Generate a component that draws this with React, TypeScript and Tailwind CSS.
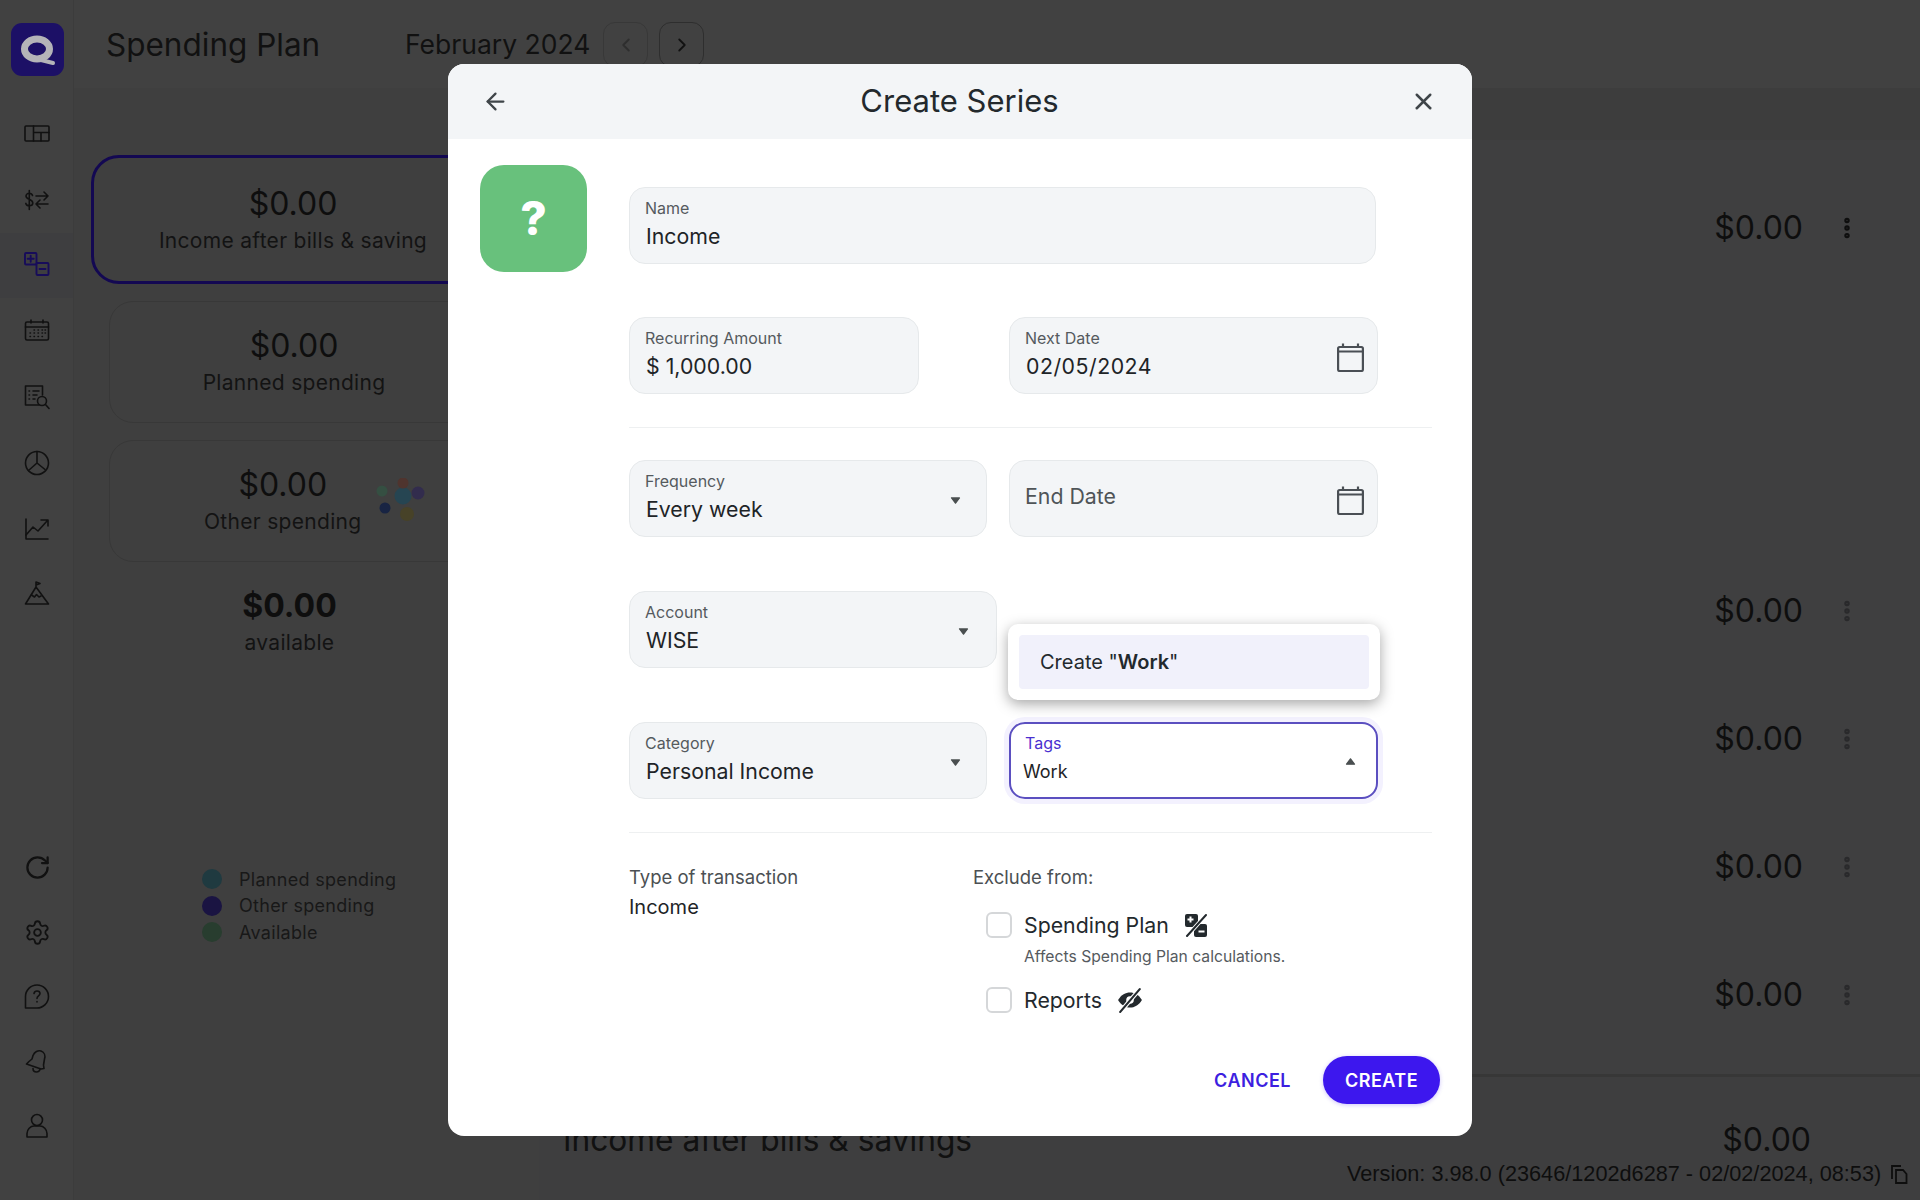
import React from "react";
import { ArrowLeft, X, ChevronLeft, ChevronRight, RotateCw, Settings, EllipsisVertical } from "lucide-react";

const FONT = "font-['Inter','Noto_Sans',sans-serif]";
const iconCls = "w-[26px] h-[26px]";

function Ico({ children, color = "#111111", sw = 1.6 }: { children: React.ReactNode; color?: string; sw?: number }) {
  return (
    <svg viewBox="0 0 26 26" className={iconCls} fill="none" stroke={color} strokeWidth={sw} strokeLinecap="round" strokeLinejoin="round">
      {children}
    </svg>
  );
}

const topIcons = [
  <Ico key="d"><rect x="1" y="5" width="24" height="15" rx="1" /><path d="M9.5 5v15M9.5 11.5H25M17 11.5V20" /></Ico>,
  <Ico key="t"><path d="M8.5 8.5C8 7 6.8 6.3 5.3 6.3 3.500 6.3 2 7.3 2 9c0 3.800 6.800 2.800 6.800 7 0 1.700-1.500 2.700-3.500 2.700-1.700 0-3-.8-3.500-2.300M5.300 3.500v19" /><path d="M12 9h12M20 5l4 4-4 4M24 17H12M16 13l-4 4 4 4" /></Ico>,
  <Ico key="p" color="#170c5a" sw={1.9}><rect x="1" y="1" width="11.500" height="11.500" rx="1" /><rect x="12.500" y="11" width="12" height="12" rx="1" /><path d="M6.700 3.700v6M3.700 6.700h6M15.500 17h6" /></Ico>,
  <Ico key="c"><rect x="1.500" y="4" width="23" height="18" rx="1.500" /><path d="M1.500 9h23M7 2v3M19 2v3" /><path d="M10 12h.5M14 12h.5M18 12h.5M21 12h.5M6 15h.5M10 15h.5M14 15h.5M18 15h.5M21 15h.5M6 18.500h.5M10 18.500h.5M14 18.500h.5M18 18.500h.5" strokeWidth={1.400} /></Ico>,
  <Ico key="l"><path d="M15 21H1.500V2h17v9" /><path d="M5 7h.5M9 7h6M5 11h.5M9 11h4M5 15h.5M9 15h2" /><circle cx="18" cy="17" r="4.500" /><path d="M21.500 20.500l3.500 4" /></Ico>,
  <Ico key="r"><circle cx="13" cy="13" r="11.500" /><path d="M13 1.500V13l8 6.500M13 13l-8.500 7.500" /></Ico>,
  <Ico key="g"><path d="M2 3v20h22" /><path d="M2 19l7-8 5 4 9-10M17 4h7v6" /></Ico>,
  <Ico key="m"><path d="M1.500 23L12 6l12.500 17zM12 6V1l4 1.500L12 4" /><path d="M7.500 14l3 2 2-2.500 2.500 2.500 2-1" /></Ico>,
];

const bottomIcons = [
  <RotateCw key="a" size={27} color="#111111" strokeWidth={2} />,
  <Settings key="b" size={27} color="#111111" strokeWidth={1.6} />,
  <Ico key="c"><path d="M1.500 24V12.500a11.500 11.500 0 1 1 11.500 11.500z" /><path d="M10 9.500c.3-1.600 1.500-2.500 3-2.500 1.700 0 3 1 3 2.600 0 2.400-3 2.400-3 4.900M13 17.500v.5" /></Ico>,
  <Ico key="d"><path d="M9 7.500c1.500-3.500 5-5.500 8-4.500 3.500 1.200 4.500 4.800 3.500 8l-1 6 .5 3.500-3 .5-14.500-5 2.500-2.500 3-2.500z" /><path d="M9 20.500c0 2 1.500 3.500 3.500 3.500s3-1 3.500-2.500" /></Ico>,
  <Ico key="e"><circle cx="13" cy="7" r="5.500" /><path d="M3 24v-3.500c0-4 3.500-7.500 7-7.500h6c3.500 0 7 3.500 7 7.500V24z" /></Ico>,
];

function Caret({ up = false }: { up?: boolean }) {
  return (
    <svg viewBox="0 0 12 8" className="w-[11px] h-[7px]" fill="#4a4f50" stroke="#4a4f50" strokeWidth={1.500} strokeLinejoin="round">
      {up ? <path d="M6 1l4.500 6h-9z" /> : <path d="M1.500 1h9L6 7z" />}
    </svg>
  );
}

function Cal() {
  return (
    <svg viewBox="0 0 27 29" className="w-[27px] h-[29px]" fill="none" stroke="#4a4f55" strokeWidth={2.200} strokeLinejoin="round">
      <rect x="1.100" y="4" width="24.800" height="24" rx="1.500" />
      <path d="M1.100 8.500h24.800M6 .5V4M21 .5V4" />
    </svg>
  );
}

function Field({ w, label, value, right, dim, digits }: { w: string; label?: string; value: string; right?: React.ReactNode; dim?: boolean; digits?: boolean }) {
  return (
    <div className={`${w} h-[77px] rounded-[16px] border border-[#e6e9eb] bg-[#f3f5f7] flex items-center justify-between pl-[15px]`}>
      <div className={`flex flex-col ${dim ? "" : "mt-[-3px]"}`}>
        {label && <span className="text-[16px] leading-[20px] text-[#555a5e]">{label}</span>}
        <span className={`text-[21.300px] leading-[28px] ${dim ? "text-[#4f5457] mt-[-6px]" : "mt-[4px] ml-[1px] text-[#1e2427]"} ${digits ? "tracking-[0.5px]" : ""}`}>{value}</span>
      </div>
      {right}
    </div>
  );
}

function SideItem({ children, active }: { children: React.ReactNode; active?: boolean }) {
  return <div className={`h-[65.800px] w-full pl-[1px] flex items-center justify-center ${active ? "bg-[#3e3e40]" : ""}`}>{children}</div>;
}

function Row({ h, first }: { h: string; first?: boolean }) {
  return (
    <div className={`${h} flex items-center justify-end pr-[60px]`}>
      <span className="text-[32px] text-[#0e0e0e] mr-[31px]">$0.00</span>
      <EllipsisVertical size={26} color={first ? "#0e0e0e" : "#29292b"} strokeWidth={3} />
    </div>
  );
}

export default function App() {
  return (
    <div className={`relative w-[1920px] h-[1200px] overflow-hidden flex bg-[#404040] ${FONT}`}>
      {/* sidebar */}
      <aside className="w-[74px] h-full shrink-0 bg-[#414141] border-r border-[#3c3c3c] flex flex-col">
        <div className="mt-[23px] ml-[11px] w-[53px] h-[53px] rounded-[11px] bg-[#1c1066] flex items-center justify-center">
          <svg viewBox="0 0 53 53" className="w-[53px] h-[53px]" fill="none">
            <ellipse cx="26" cy="26" rx="12.500" ry="10" stroke="#b4b4b8" strokeWidth="7" />
            <path d="M30 37l12 3" stroke="#b4b4b8" strokeWidth="4" strokeLinecap="round" />
          </svg>
        </div>
        <div className="mt-[25px] flex flex-col">
          {topIcons.map((ic, i) => (
            <SideItem key={i} active={i === 2}>{ic}</SideItem>
          ))}
        </div>
        <div className="mt-auto mb-[61px] pl-[1px] flex flex-col gap-[37.500px] items-center">
          {bottomIcons.map((ic, i) => (
            <div key={i} className="h-[27px] flex items-center justify-center">{ic}</div>
          ))}
        </div>
      </aside>

      {/* main */}
      <main className="flex-1 flex flex-col">
        <header className="h-[88px] flex items-center pl-[32px] pt-[1px] bg-[#414141]">
          <h1 className="text-[31.500px] font-normal text-[#111111] w-[299px]">Spending Plan</h1>
          <span className="text-[26.500px] text-[#111111]">February 2024</span>
          <div className="ml-[13px] w-[45px] h-[45px] rounded-[12px] border border-[#383838] flex items-center justify-center">
            <ChevronLeft size={22} color="#2e2e2e" />
          </div>
          <div className="ml-[11px] w-[45px] h-[45px] rounded-[12px] border border-[#2e2e2e] flex items-center justify-center">
            <ChevronRight size={22} color="#111111" />
          </div>
        </header>
        <div className="flex-1 flex">
          <section className="w-[465px] shrink-0 bg-[#3f3f3f] relative pt-[67px]">
            <div className="ml-[17px] w-[500px] h-[129px] rounded-[28px] border-[3px] border-[#130852] flex flex-col items-center justify-center pr-[96px]">
              <span className="text-[32px] leading-[40px] text-[#0e0e0e] mt-[1px]">$0.00</span>
              <span className="mt-[1px] text-[21px] leading-[32px] text-[#131313] tracking-[0.3px] whitespace-nowrap">Income after bills &amp; saving</span>
            </div>
            <div className="ml-[35px] mt-[17px] w-[480px] h-[122px] rounded-[24px] border border-[#383838] flex flex-col items-center justify-center pr-[110px]">
              <span className="text-[32px] leading-[40px] text-[#0e0e0e] mt-[1px]">$0.00</span>
              <span className="mt-[1px] text-[21px] leading-[32px] text-[#131313] tracking-[0.3px]">Planned spending</span>
            </div>
            <div className="ml-[35px] mt-[17px] w-[480px] h-[122px] rounded-[24px] border border-[#383838] flex items-center">
              <div className="ml-[94px] mt-[1px] flex flex-col items-center">
                <span className="text-[32px] leading-[40px] text-[#0e0e0e]">$0.00</span>
                <span className="mt-[1px] text-[21px] leading-[32px] text-[#131313] tracking-[0.3px]">Other spending</span>
              </div>
              <svg viewBox="0 0 50 46" className="w-[50px] h-[46px] ml-[15px]">
                <circle cx="27" cy="18" r="8.500" fill="#264552" />
                <circle cx="27" cy="5" r="5.500" fill="#4f342e" />
                <circle cx="6" cy="13" r="5.500" fill="#354f42" />
                <circle cx="42" cy="15" r="6.500" fill="#322c4d" />
                <circle cx="9" cy="30" r="5.500" fill="#182443" />
                <circle cx="31" cy="36" r="7" fill="#474228" />
              </svg>
            </div>
            <div className="mt-[22px] ml-[61px] w-[309px] flex flex-col items-center">
              <span className="text-[32px] leading-[44px] font-bold text-[#0e0e0e]">$0.00</span>
              <span className="text-[21px] leading-[32px] text-[#131313] tracking-[0.3px] mt-[-1px]">available</span>
            </div>
            <div className="mt-[210px] ml-[128px] flex flex-col gap-[6.500px]">
              {[["#1f3a40", "Planned spending"], ["#1a1442", "Other spending"], ["#283d2f", "Available"]].map(([c, t]) => (
                <div key={t} className="flex items-center h-[20px]">
                  <span className="w-[20px] h-[20px] rounded-full" style={{ background: c }} />
                  <span className="ml-[17px] text-[18px] text-[#181818] tracking-[0.3px]">{t}</span>
                </div>
              ))}
            </div>
          </section>
          <section className="flex-1 flex flex-col bg-[#3e3e3f]">
            <div className="h-[52px] bg-[#3d3d3d]" />
            <div className="h-[934px] bg-[#3f3f40]">
              <Row first h="h-[175px]" />
              <div className="h-[232px]" />
              <Row h="h-[128px]" />
              <Row h="h-[128px]" />
              <Row h="h-[128px]" />
              <Row h="h-[128px]" />
            </div>
            <div className="h-[126px] border-t-[3px] border-[#373737] flex items-start justify-end pr-[109px] pt-[38px] relative">
              <span className="absolute left-[24px] top-[38px] text-[31.700px] leading-[50px] text-[#111111] whitespace-nowrap">Income after bills &amp; savings</span>
              <span className="text-[32px] leading-[50px] text-[#0e0e0e]">$0.00</span>
            </div>
          </section>
        </div>
      </main>

      {/* version */}
      <div className="absolute left-[1347px] top-[1161px] flex items-center font-['Liberation_Sans',Arial,sans-serif] text-[21.700px] leading-[26px] text-[#0e0e0e] whitespace-nowrap">
        Version: 3.98.0 (23646/1202d6287 - 02/02/2024, 08:53)
        <svg viewBox="0 0 18 20" className="ml-[9px] w-[18px] h-[20px]" fill="none" stroke="#0e0e0e" strokeWidth="1.800">
          <path d="M2 15V2h9" /><path d="M6 6h7l3.500 4v9H6z" />
        </svg>
      </div>

      {/* modal */}
      <div className="absolute left-[448px] top-[64px] w-[1024px] h-[1072px] rounded-[16px] bg-white overflow-hidden flex flex-col">
        <div className="h-[75px] shrink-0 bg-[#f3f5f7] flex items-center justify-between pl-[34px] pr-[35px]">
          <ArrowLeft size={27} color="#3f4549" strokeWidth={2} />
          <h2 className="text-[31px] font-normal text-[#23292d]">Create Series</h2>
          <X size={27} color="#3f4549" strokeWidth={2.200} />
        </div>
        <div className="flex-1 flex pl-[32px]">
          <div className="mt-[26px] w-[107px] h-[107px] rounded-[24px] bg-[#68c17c] flex items-center justify-center text-white text-[46px] font-extrabold shrink-0">?</div>
          <div className="ml-[42px] w-[811px] pt-[48px] flex flex-col relative">
            <Field w="w-[747px]" label="Name" value="Income" />
            <div className="mt-[53px] flex">
              <div className="w-[380px]"><Field w="w-[290px]" label="Recurring Amount" value="$ 1,000.00" /></div>
              <Field w="w-[369px]" label="Next Date" value="02/05/2024" digits right={<span className="mr-[13px] mt-[3px]"><Cal /></span>} />
            </div>
            <div className="mt-[33px] w-[803px] border-t border-[#eef0f1]" />
            <div className="mt-[32px] flex">
              <div className="w-[380px]"><Field w="w-[358px]" label="Frequency" value="Every week" right={<span className="mr-[25px] mt-[3px] flex"><Caret /></span>} /></div>
              <Field w="w-[369px]" value="End Date" dim right={<span className="mr-[13px] mt-[3px]"><Cal /></span>} />
            </div>
            <div className="mt-[54px]">
              <Field w="w-[368px]" label="Account" value="WISE" right={<span className="mr-[27px] mt-[3px] flex"><Caret /></span>} />
            </div>
            <div className="mt-[54px] flex">
              <div className="w-[380px]"><Field w="w-[358px]" label="Category" value="Personal Income" right={<span className="mr-[25px] mt-[3px] flex"><Caret /></span>} /></div>
              <div className="w-[369px] h-[77px] rounded-[16px] border-2 border-[#5b4fc0] bg-white shadow-[0_0_0_5px_#f3f1fe] flex items-center justify-between pl-[12px]">
                <div className="flex flex-col">
                  <span className="text-[16px] leading-[20px] text-[#4a2fd0] ml-[2px] mt-[-3px]">Tags</span>
                  <span className="text-[18px] leading-[26px] mt-[6px] text-[#1e2427]">Work</span>
                </div>
                <span className="mr-[20px] mt-[1px] flex"><Caret up /></span>
              </div>
            </div>
            <div className="mt-[33px] w-[803px] border-t border-[#eef0f1]" />
            <div className="mt-[32px] flex">
              <div className="w-[344px]">
                <div className="text-[18.500px] leading-[24px] text-[#4b5053]">Type of transaction</div>
                <div className="mt-[4px] text-[20px] leading-[28px] text-[#1e2427]">Income</div>
              </div>
              <div>
                <div className="text-[18.500px] leading-[24px] text-[#4b5053]">Exclude from:</div>
                <div className="mt-[22px] ml-[13px] flex items-center">
                  <span className="w-[26px] h-[26px] rounded-[6px] border-2 border-[#d5d7d9]" />
                  <span className="ml-[12px] text-[21.300px] leading-[28px] text-[#23292d]">Spending Plan</span>
                  <svg viewBox="0 0 24 24" className="ml-[15px] w-[24px] h-[24px]">
                    <rect x="1" y="1" width="13" height="13" rx="2" fill="#23292d" />
                    <rect x="10" y="11" width="13" height="13" rx="2" fill="#23292d" />
                    <path d="M3 23L22 2" stroke="#fff" strokeWidth="4" />
                    <path d="M3 23L22 2" stroke="#23292d" strokeWidth="2" strokeLinecap="round" />
                    <path d="M3.500 6.500h6M6.500 3.500v6M14.500 18.500h6" stroke="#fff" strokeWidth="2" />
                  </svg>
                </div>
                <div className="ml-[51px] mt-[7px] text-[15.700px] leading-[22px] text-[#555a5e]">Affects Spending Plan calculations.</div>
                <div className="mt-[18px] ml-[13px] flex items-center">
                  <span className="w-[26px] h-[26px] rounded-[6px] border-2 border-[#d5d7d9]" />
                  <span className="ml-[12px] text-[21.300px] leading-[28px] text-[#23292d]">Reports</span>
                  <svg viewBox="0 0 24 24" className="ml-[15px] w-[26px] h-[26px]">
                    <path d="M1 12c3-5 7-7 11-7s8 2 11 7c-3 5-7 7-11 7s-8-2-11-7z" fill="#23292d" />
                    <circle cx="12" cy="12" r="3.500" fill="#fff" />
                    <path d="M3 23L21 2" stroke="#fff" strokeWidth="4" />
                    <path d="M3 23L21 2" stroke="#23292d" strokeWidth="2" strokeLinecap="round" />
                  </svg>
                </div>
              </div>
            </div>
            <div className="mt-[42px] flex items-center justify-end">
              <span className="text-[18px] font-semibold tracking-[0.5px] text-[#3d1fe0]">CANCEL</span>
              <span className="ml-[32px] w-[117px] h-[48px] rounded-full bg-[#3d17ee] shadow-[0_1px_4px_rgba(61,23,238,0.25)] flex items-center justify-center text-[18px] font-semibold tracking-[0.5px] text-white">CREATE</span>
            </div>
            {/* dropdown */}
            <div className="absolute left-[379px] top-[485px] w-[372px] h-[76px] rounded-[10px] bg-white shadow-[0_4px_14px_rgba(0,0,0,0.35)] p-[11px] flex">
              <div className="flex-1 rounded-[4px] bg-[#f1f1fb] flex items-center pl-[21px] text-[20px] text-[#23292d]">
                Create "<b className="font-semibold">Work</b>"
              </div>
            </div>
          </div>
        </div>
      </div>
    </div>
  );
}
